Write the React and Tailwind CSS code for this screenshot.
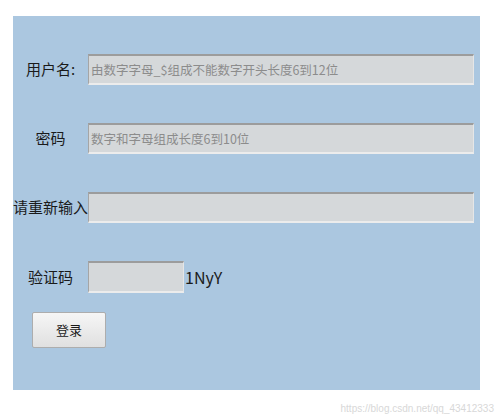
const cjk = { fontFamily: '"Noto Sans CJK SC", "Liberation Sans", sans-serif' };

const inputCls =
  'h-[31px] bg-[#d5d8da] border border-t-2 border-t-[#9c9c9c] border-l-[#a5a5a5] border-r-[#e6e6e6] border-b-2 border-b-[#ececec] px-[2px] text-[12.5px] text-[#333] placeholder:text-[#8c8c8c] outline-none';

const Row = ({ label, placeholder, className = '' }) => (
  <div className={`flex items-center ${className}`}>
    <label className="w-[75px] text-center text-[15px] text-[#1a1a1a] whitespace-nowrap">{label}</label>
    <input className={`${inputCls} w-[386px]`} placeholder={placeholder} />
  </div>
);

export default function App() {
  return (
    <div className="w-[500px] h-[420px] bg-white relative" style={cjk}>
      <div className="absolute left-[13px] top-[16px] w-[467px] h-[374px] bg-[#abc7e0] pt-[38px]">
        <Row label="用户名:" placeholder="由数字字母_$组成不能数字开头长度6到12位" />
        <Row className="mt-[38px]" label="密码" placeholder="数字和字母组成长度6到10位" />
        <Row className="mt-[38px]" label="请重新输入" />
        <div className="flex items-center mt-[38px]">
          <label className="w-[75px] text-center text-[15px] text-[#1a1a1a]">验证码</label>
          <input className={`${inputCls} w-[96px] h-[32px]`} />
          <span className="ml-[1px] text-[16px] text-[#1a1a1a]">1NyY</span>
        </div>
        <button className="ml-[19px] mt-[19px] w-[74px] h-[36px] border border-[#adadad] rounded-[2px] bg-gradient-to-b from-[#f6f6f6] to-[#e0e0e0] text-[13px] text-[#1a1a1a]">
          登录
        </button>
      </div>
      <div
        className="absolute right-[6px] top-[401px] text-[10px] text-[#d8d8d8]"
        style={{ fontFamily: '"Liberation Sans", sans-serif' }}
      >
        https://blog.csdn.net/qq_43412333
      </div>
    </div>
  );
}
